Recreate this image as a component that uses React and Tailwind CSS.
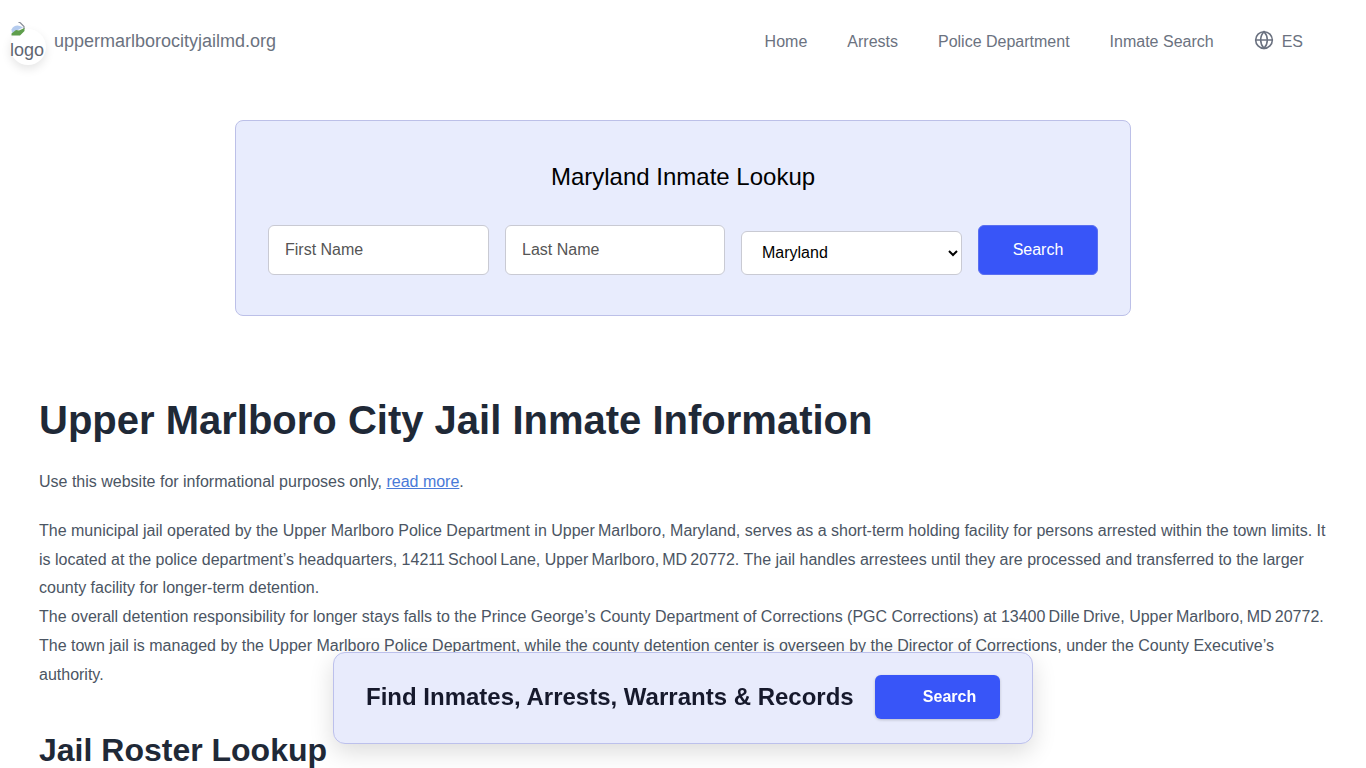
import { Globe } from "lucide-react";

const navLinks = ["Home", "Arrests", "Police Department", "Inmate Search"];

// the address in the source text uses narrow spaces, so the line breaks depend on them
const firstPart =
  "The municipal jail operated by the Upper Marlboro Police Department in Upper\u2009Marlboro, Maryland, serves as a short-term holding facility for persons arrested within the town limits. It is located at the police department’s headquarters, 14211\u2009School\u2009Lane, Upper\u2009Marlboro,\u2009MD\u200920772. The jail handles arrestees until they are processed and transferred to the larger county facility for longer-term detention.";
const secondPart =
  "The overall detention responsibility for longer stays falls to the Prince George’s County Department of Corrections (PGC Corrections) at 13400\u2009Dille\u2009Drive, Upper\u2009Marlboro,\u2009MD\u200920772. The town jail is managed by the Upper Marlboro Police Department, while the county detention center is overseen by the Director of Corrections, under the County Executive’s authority.";

function BrokenImageIcon() {
  return (
    <svg width="16" height="16" viewBox="0 0 16 16" className="absolute top-[1px] left-0">
      <path d="M10 1.5h-1.5M10 1.5l4 4V8" fill="none" stroke="#8b8f99" strokeWidth="1.2" />
      <path d="M1.5 8.5C3 5 7 3.5 10 5l3 1.5-4 2-7 3.5z" fill="#b4cbee" />
      <path d="M1.5 12.5L6 9l3 .5L14.5 7v3L10 14.5H1.5z" fill="#5f9e4c" />
    </svg>
  );
}

function Header() {
  return (
    <header className="flex items-center justify-between h-[82px] pl-[10px] pr-[63px]">
      <div className="flex items-center gap-2">
        <div className="relative w-9 h-9 mt-[12px] rounded-full bg-white shadow-[0_4px_10px_rgba(0,0,0,0.1)]">
          <div className="absolute left-0 top-[-9px] h-9 w-9 text-[#5f6672] text-[18px] leading-[21px]">
            <BrokenImageIcon />
            <span className="absolute left-0 top-[20px]">logo</span>
          </div>
        </div>
        <span className="text-[18px] text-[#6b7280] mt-[1px]">uppermarlborocityjailmd.org</span>
      </div>
      <nav className="flex items-center gap-10 mt-[2px] text-[#6b7280]">
        {navLinks.map((link) => (
          <a key={link} href="#">{link}</a>
        ))}
        <div className="flex items-center gap-2 ml-[1px]">
          <Globe size={20} strokeWidth={1.9} className="mt-[-5px] ml-[-1px]" />
          <span>ES</span>
        </div>
      </nav>
    </header>
  );
}

function LookupForm() {
  return (
    <section className="w-[896px] h-[196px] mx-auto mt-[38px] px-8 pt-[38px] rounded-lg border border-[#bcc0e8] bg-[#e8ecfd]">
      <h2 className="text-2xl leading-[36px] text-center text-black">Maryland Inmate Lookup</h2>
      <div className="flex items-end gap-4 mt-[30px]">
        <input placeholder="First Name" className="w-[221px] h-[50px] px-4 rounded-md border border-[#c9cad3] bg-white placeholder:text-[#555]" />
        <input placeholder="Last Name" className="w-[220px] h-[50px] px-4 rounded-md border border-[#c9cad3] bg-white placeholder:text-[#555]" />
        <select defaultValue="Maryland" className="w-[221px] h-[44px] pl-4 pr-1 pb-[2px] rounded-md border border-[#c9cad3] bg-white text-black">
          <option>Maryland</option>
        </select>
        <button className="w-[120px] h-[50px] rounded-md border border-[#5a6ff0] bg-[#3855f8] text-white">Search</button>
      </div>
    </section>
  );
}

function Article() {
  return (
    <main className="px-[39px] mt-[78px] text-[#4b5563]">
      <h1 className="text-[40px] leading-[52px] font-bold text-[#1f2937]">Upper Marlboro City Jail Inmate Information</h1>
      <p className="mt-[21px] leading-[29px]">
        Use this website for informational purposes only, <a href="#" className="underline text-[#4a7ad8]">read more</a>.
      </p>
      <p className="mt-[20.8px] leading-[28.8px]">
        {firstPart}
        <br />
        {secondPart}
      </p>
      <h2 className="mt-[39px] text-[32px] leading-[42px] font-bold text-[#1f2937]">Jail Roster Lookup</h2>
    </main>
  );
}

function FloatingBar() {
  return (
    <div className="fixed left-[333px] top-[652px] w-[700px] h-[92px] flex items-center justify-between px-8 pb-[2px] rounded-xl border border-[#bcc0ec] bg-[#e8ebfc] shadow-[0_8px_24px_rgba(0,0,0,0.14)]">
      <span className="text-2xl font-bold text-[#16192c]">Find Inmates, Arrests, Warrants &amp; Records</span>
      <button className="w-[125px] h-[44px] pl-6 rounded-md bg-[#3855f8] text-white font-bold shadow-[0_1px_3px_rgba(0,0,0,0.2)]">Search</button>
    </div>
  );
}

export default function App() {
  return (
    <div className="h-screen overflow-hidden bg-white font-['Liberation_Sans',Arial,sans-serif]">
      <Header />
      <LookupForm />
      <Article />
      <FloatingBar />
    </div>
  );
}
